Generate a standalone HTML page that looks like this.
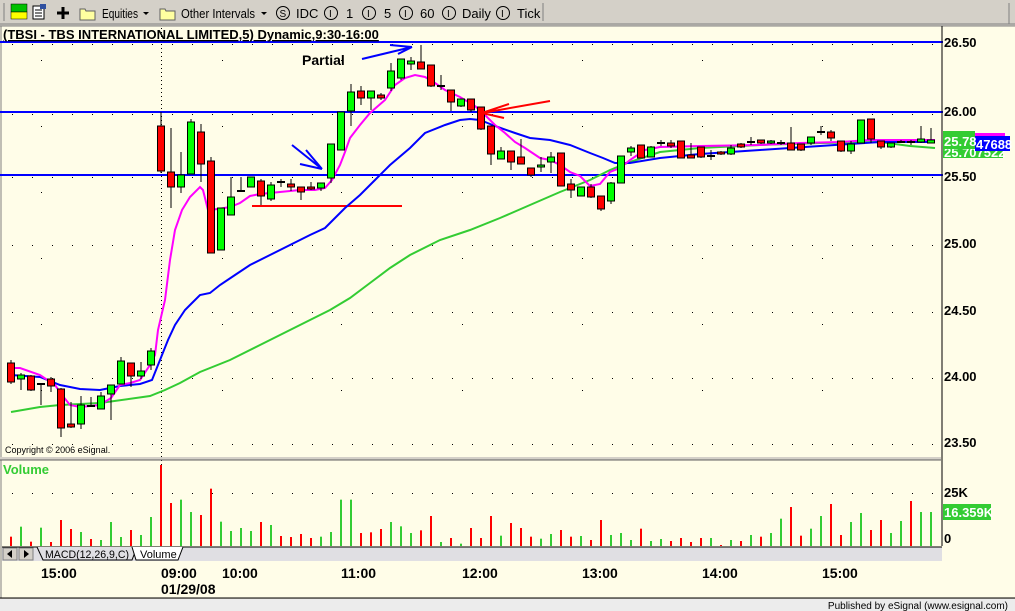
<!DOCTYPE html>
<html><head><meta charset="utf-8"><style>
body{margin:0;width:1015px;height:611px;overflow:hidden;background:#d4d0c8;font-family:"Liberation Sans",sans-serif}
svg{position:absolute;left:0;top:0}
</style></head><body>
<svg id="s" width="1015" height="611" xmlns="http://www.w3.org/2000/svg">
<rect x="0" y="0" width="1015" height="611" fill="#d4d0c8"/>
<rect x="0" y="0" width="1015" height="24" fill="#d4d0c8"/>
<line x1="0" y1="24" x2="1015" y2="24" stroke="#808080"/>
<line x1="4" y1="3" x2="4" y2="21" stroke="#808080"/>
<line x1="1009" y1="3" x2="1009" y2="24" stroke="#808080"/>
<rect x="11" y="4" width="16" height="8" fill="#00c000" stroke="#000" stroke-width="0.5"/>
<rect x="11" y="12" width="16" height="7" fill="#ffff00" stroke="#000" stroke-width="0.5"/>
<rect x="33" y="6" width="11" height="13" fill="#fff" stroke="#000"/>
<line x1="35" y1="10" x2="42" y2="10" stroke="#000"/><line x1="35" y1="13" x2="42" y2="13" stroke="#000"/><line x1="35" y1="16" x2="42" y2="16" stroke="#000"/>
<rect x="40" y="4" width="6" height="5" fill="#3050a0"/>
<path d="M63 7v12M57 13h12" stroke="#000" stroke-width="3"/>
<g font-size="13" fill="#000">
<path d="M80 9h5l1 2h9v9h-15z" fill="#ffffa0" stroke="#606060"/>
<text x="102" y="18" textLength="36" lengthAdjust="spacingAndGlyphs">Equities</text><path d="M143 12l3 3 3-3z" fill="#000"/>
<path d="M160 9h5l1 2h9v9h-15z" fill="#ffffa0" stroke="#606060"/>
<text x="181" y="18" textLength="74" lengthAdjust="spacingAndGlyphs">Other Intervals</text><path d="M261 12l3 3 3-3z" fill="#000"/>
<circle cx="283" cy="13" r="6.5" fill="none" stroke="#000"/><text x="279.5" y="17" font-size="10">S</text><text x="296" y="18">IDC</text>
<circle cx="331" cy="13" r="6.5" fill="none" stroke="#000"/><text x="329" y="17" font-size="10">I</text><text x="346" y="18">1</text>
<circle cx="369" cy="13" r="6.5" fill="none" stroke="#000"/><text x="367" y="17" font-size="10">I</text><text x="384" y="18">5</text>
<circle cx="406" cy="13" r="6.5" fill="none" stroke="#000"/><text x="404" y="17" font-size="10">I</text><text x="420" y="18">60</text>
<circle cx="449" cy="13" r="6.5" fill="none" stroke="#000"/><text x="447" y="17" font-size="10">I</text><text x="462" y="18">Daily</text>
<circle cx="503" cy="13" r="6.5" fill="none" stroke="#000"/><text x="501" y="17" font-size="10">I</text><text x="517" y="18">Tick</text>
</g>
<line x1="543" y1="3" x2="543" y2="21" stroke="#808080"/>
<rect x="0" y="26" width="1015" height="572" fill="#fffde8"/>
<line x1="0" y1="26" x2="1015" y2="26" stroke="#808080"/>
<line x1="1" y1="26" x2="1" y2="598" stroke="#808080"/>
<g id="grid"></g>
<line x1="0" y1="42" x2="943" y2="42" stroke="#0000ff" stroke-width="2"/>
<line x1="0" y1="112" x2="943" y2="112" stroke="#0000ff" stroke-width="2"/>
<line x1="0" y1="175" x2="943" y2="175" stroke="#0000ff" stroke-width="2"/>
<text x="3" y="39" font-size="13" font-weight="bold" text-decoration="underline">(TBSI - TBS INTERNATIONAL LIMITED,5) Dynamic,9:30-16:00</text>
<line x1="252" y1="206" x2="402" y2="206" stroke="#ff0000" stroke-width="2"/>
<polyline id="green" fill="none" stroke="#33cc33" stroke-width="2"/>
<polyline id="blue" fill="none" stroke="#0000ff" stroke-width="2"/>
<polyline id="pink" fill="none" stroke="#ff00ff" stroke-width="2"/>
<g id="cand"></g>
<g stroke="#0000ff" stroke-width="2" fill="none">
<path d="M292 145l30 24M306 150l16 19M300 164l22 5"/>
<path d="M362 59l50 -12M390 45l22 2M398 54l14 -7"/>
</g>
<g stroke="#ff0000" stroke-width="2" fill="none">
<path d="M482 113l68 -12M482 113l27 -9M482 113l22 5"/>
</g>
<text x="302" y="65" font-size="14" font-weight="bold">Partial</text>
<text x="5" y="453" font-size="9">Copyright © 2006 eSignal.</text>
<line x1="942" y1="26" x2="942" y2="546" stroke="#000"/>
<g font-size="13" font-weight="bold">
<text x="944" y="47">26.50</text><text x="944" y="116">26.00</text><text x="944" y="181">25.50</text>
<text x="944" y="248">25.00</text><text x="944" y="315">24.50</text><text x="944" y="381">24.00</text><text x="944" y="447">23.50</text>
</g>
<rect x="943" y="145" width="60" height="13" fill="#33cc33"/>
<text x="944" y="157" font-size="13" font-weight="bold" fill="#fff">25.707522</text>
<rect x="975" y="133" width="30" height="4" fill="#ff00ff"/>
<rect x="975" y="136" width="35" height="15" fill="#0000ff"/>
<text x="976" y="149" font-size="13" font-weight="bold" fill="#fff">47688</text>
<rect x="943" y="131" width="32" height="18" fill="#33cc33"/>
<text x="944" y="146" font-size="13" font-weight="bold" fill="#fff">25.78</text>
<rect x="0" y="457" width="941" height="3" fill="#d4d0c8"/>
<line x1="0" y1="460" x2="941" y2="460" stroke="#606060"/>
<text x="3" y="474" font-size="13" font-weight="bold" fill="#33cc33">Volume</text>
<g id="vol"></g>
<text x="944" y="497" font-size="13" font-weight="bold">25K</text>
<rect x="943" y="504" width="48" height="16" fill="#33cc33"/>
<text x="944" y="517" font-size="13" font-weight="bold" fill="#fff">16.359K</text>
<text x="944" y="543" font-size="13" font-weight="bold">0</text>
<rect x="2" y="547" width="940" height="14" fill="#e0dfe3"/>
<line x1="2" y1="547" x2="942" y2="547" stroke="#000"/>
<rect x="3" y="548" width="14" height="12" fill="#d4d0c8" stroke="#808080"/>
<path d="M12 550v8l-5-4z" fill="#000"/>
<rect x="19" y="548" width="14" height="12" fill="#d4d0c8" stroke="#808080"/>
<path d="M24 550v8l5-4z" fill="#000"/>
<path d="M37 547l6 13h89l5-13" fill="#e0dfe3" stroke="#000"/>
<path d="M132 547l4 13h42l5-13" fill="#fff" stroke="#000"/>
<text x="45" y="558" font-size="11" textLength="84" lengthAdjust="spacingAndGlyphs">MACD(12,26,9,C)</text>
<text x="140" y="558" font-size="11">Volume</text>
<g font-size="14" font-weight="bold">
<text x="41" y="578">15:00</text><text x="161" y="578">09:00</text><text x="161" y="594">01/29/08</text>
<text x="222" y="578">10:00</text><text x="341" y="578">11:00</text><text x="462" y="578">12:00</text>
<text x="582" y="578">13:00</text><text x="702" y="578">14:00</text><text x="822" y="578">15:00</text>
</g>
<line x1="0" y1="598" x2="1015" y2="598" stroke="#000"/>
<rect x="0" y="599" width="1015" height="12" fill="#ececec"/>
<text x="1008" y="609" font-size="10" text-anchor="end">Published by eSignal (www.esignal.com)</text>
</svg>
<script>
var NS="http://www.w3.org/2000/svg";
function el(p,t,a){var e=document.createElementNS(NS,t);for(var k in a)e.setAttribute(k,a[k]);p.appendChild(e);return e;}
var g=document.getElementById("grid");
[42,112,175,243,310,376,442,493].forEach(function(y){for(var x=12;x<940;x+=20)el(g,"rect",{x:x,y:y+(y==493?0:2),width:1,height:1,fill:"#000"});});
for(var y=28;y<546;y+=4)el(g,"rect",{x:161,y:y,width:1,height:1,fill:"#000"});
[41,222,341,462,582,702,822].forEach(function(x){for(var y=60;y<456;y+=66)el(g,"rect",{x:x,y:y,width:1,height:1,fill:"#000"});});
var C=[[363,382,360,384],[379,375,373,390],[376,390,375,391],[384,384,384,405],[379,386,377,392],[389,428,388,437],[424,427,402,428],[424,405,396,429],[406,406,397,407],[409,396,392,409],[394,385,385,420],[384,361,357,384],[363,376,363,387],[376,371,362,379],[365,351,348,370],
[126,171,112,173],[172,187,128,208],[187,175,152,193],[174,122,119,174],[132,164,124,182],[161,253,157,253],[250,208,208,250],[215,197,177,215],[191,191,177,191],[187,177,177,187],[181,196,179,205],[199,185,182,201],[182,182,179,187],[184,187,179,191],[187,192,187,200],[187,189,182,190],[188,183,183,191],[178,144,144,183],[150,112,112,150],[111,92,84,126],[91,98,86,105],[98,91,91,110],[95,98,93,100],[88,71,63,91],[78,59,59,80],[64,61,57,70],[62,69,45,69],[65,86,65,87],[86,86,75,90],[90,102,90,111],[106,99,99,107],[99,110,99,112],[107,129,107,130],[126,154,126,165],[159,151,147,159],[151,162,151,170],[157,164,139,164],[168,175,168,177],[167,165,157,172],[162,157,152,173],[153,186,153,186],[184,190,179,198],[196,187,187,196],[187,197,184,198],[196,209,196,211],[201,183,182,204],[183,156,156,183],
[152,148,146,156],[145,158,145,158],[157,147,146,157],[143,143,140,146],[143,146,140,148],[141,158,141,158],[155,158,143,158],[147,157,147,158],[156,156,150,160],[152,154,151,155],[154,148,145,155],[144,147,143,148],[142,142,137,145],[140,143,140,144],[143,141,140,144],[143,143,140,145],[143,150,127,150],[144,150,144,151],[143,137,137,145],[132,132,126,135],[132,138,130,141],[141,151,141,152],[151,144,141,154],[143,120,120,143],[119,139,119,143],[141,147,141,149],[147,143,143,148],[142,142,140,143],[142,142,140,145],[142,139,126,143],[143,140,128,143]];
var cg=document.getElementById("cand");
C.forEach(function(c,i){var x=11+i*10;var up=c[1]<c[0];
el(cg,"line",{x1:x,y1:c[2],x2:x,y2:c[3],stroke:"#000"});
var t=Math.min(c[0],c[1]),h=Math.abs(c[0]-c[1]);
if(h<1){el(cg,"line",{x1:x-4,y1:t,x2:x+4,y2:t,stroke:"#000","stroke-width":2});}
else el(cg,"rect",{x:x-3.5,y:t,width:7,height:h,fill:up?"#00ff00":"#ff0000",stroke:"#000"});});
function pl(id,pts){document.getElementById(id).setAttribute("points",pts.map(function(p){return p.join(",")}).join(" "));}
pl("pink",[[11,368],[20,368],[40,375],[55,385],[62,395],[70,405],[80,407],[100,405],[111,398],[120,385],[130,383],[140,380],[150,365],[155,355],[158,330],[165,300],[170,260],[175,230],[182,210],[190,197],[200,187],[203,190],[208,210],[218,209],[230,207],[240,203],[250,196],[260,194],[280,192],[300,190],[315,190],[325,188],[332,180],[340,165],[345,152],[350,138],[360,125],[370,113],[385,100],[395,85],[405,78],[415,75],[425,77],[435,83],[445,90],[460,97],[475,106],[485,115],[495,125],[505,133],[515,142],[525,148],[540,158],[550,160],[560,165],[570,172],[580,176],[590,186],[600,184],[610,172],[620,168],[630,160],[645,150],[660,147],[700,146],[760,145],[800,143],[840,142],[870,140],[900,140],[935,140]]);
pl("blue",[[11,375],[40,377],[60,385],[80,389],[100,390],[110,388],[120,386],[140,384],[152,380],[160,360],[168,340],[175,325],[185,310],[192,303],[200,295],[210,293],[220,285],[235,275],[250,265],[270,255],[290,245],[310,235],[325,228],[335,218],[345,208],[360,195],[375,180],[390,165],[410,148],[425,133],[445,125],[460,120],[470,119],[480,120],[495,126],[515,133],[530,138],[550,140],[570,145],[590,153],[603,158],[615,163],[630,163],[660,158],[700,154],[760,150],[820,146],[880,142],[935,142]]);
pl("green",[[11,412],[40,407],[60,405],[100,403],[150,396],[165,390],[180,383],[200,372],[230,360],[260,345],[300,325],[330,310],[350,298],[370,283],[390,268],[410,255],[440,240],[470,230],[500,218],[530,205],[560,192],[590,180],[610,170],[630,162],[660,152],[700,148],[760,145],[820,143],[880,142],[910,146],[935,148]]);
var V="r245 g215 r260 g218 r261 r195 r222 g231 r252 g255 g201 g246 r225 g240 g186 r30 r144 g134 g171 r180 r101 g200 g228 g219 g228 r201 g210 r243 r246 r237 r249 g245 g231 g134 g134 r234 r232 r222 g201 g214 g234 r226 r183 g261 r249 g266 r219 r249 r183 g242 r204 r219 r245 g251 g237 r225 r245 g243 r255 r195 g240 g234 g255 r221 g258 g252 r258 r249 r261 r249 g249 r270 g255 r258 g240 r245 g234 g191 r156 r242 g221 g183 r147 r240 g201 g174 r225 r195 g234 g198 r138 g171 g171".split(" ");
var vg=document.getElementById("vol");
V.forEach(function(v,i){var x=10+i*10;var t=455+(+v.slice(1))/3;el(vg,"rect",{x:x,y:t,width:2,height:546-t,fill:v[0]=="r"?"#ff0000":"#33cc33"});});
</script>
</body></html>
